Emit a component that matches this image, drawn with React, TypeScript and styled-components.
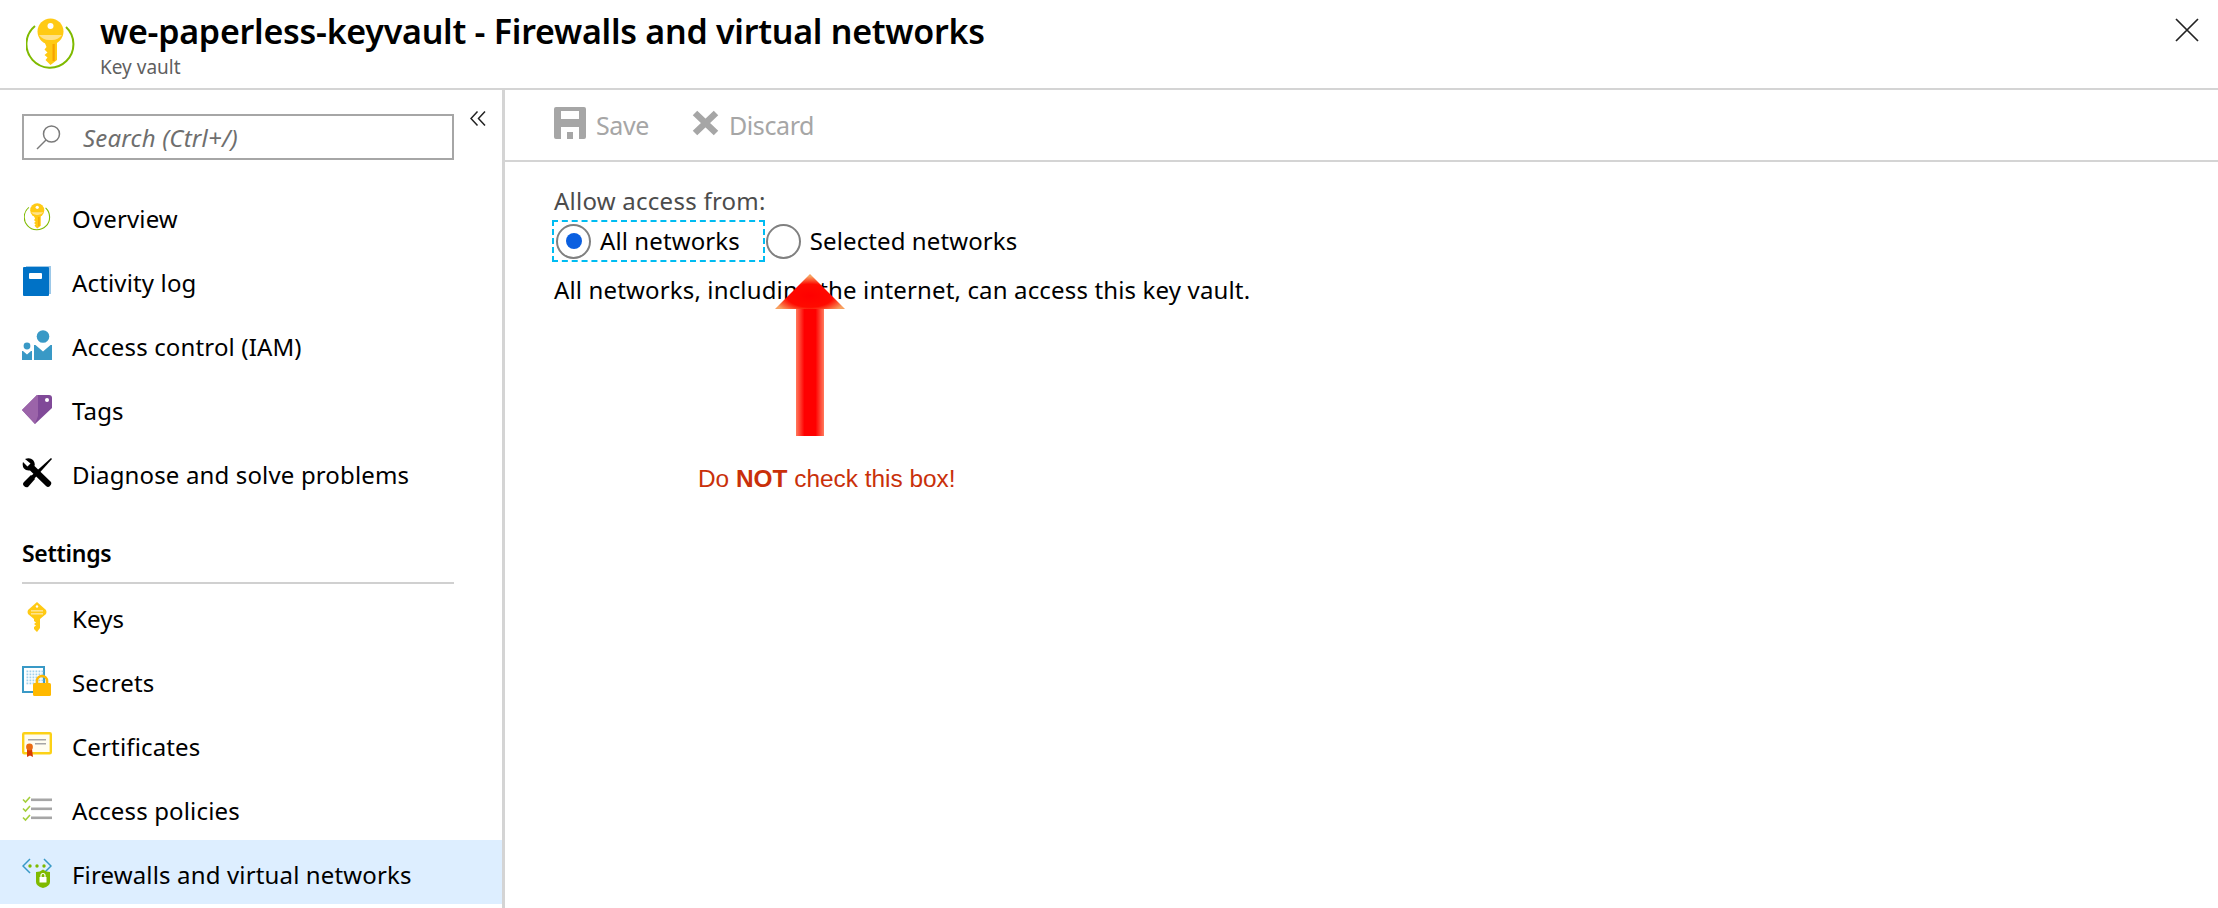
import React from 'react';
import styled, { createGlobalStyle } from 'styled-components';

const GlobalStyle = createGlobalStyle`
    html, body {
        margin: 0;
        padding: 0;
        background: #ffffff;
    }
    body {
        font-family: "Noto Sans", "Open Sans", sans-serif;
        color: #000000;
    }
`;

const KeyVaultIcon = ({ size }: { size: number }) => (
    <svg width={size} height={size * 1.04} viewBox="0 0 50 52">
        <path d="M9 8 A23.5 23.5 0 1 0 40 9" fill="none" stroke="#7fba00" strokeWidth="2" />
        <circle cx="24.5" cy="13.5" r="13" fill="#ffca14" />
        <path d="M18.5 24 H31 V42 L24.5 47 L19.5 42 L21.5 39.5 L18.5 37 L21.5 34.5 L18.5 31.5 L20.5 29 Z" fill="#ffca14" />
        <path d="M13 17 H36 A13 13 0 0 1 24.5 22 A13 13 0 0 1 13 17 Z" fill="#ffe28a" />
        <circle cx="24.5" cy="8" r="3" fill="#ffffff" />
        <rect x="26.5" y="26" width="2.2" height="17" fill="#f7a300" />
    </svg>
);

const BookIcon = () => (
    <svg width="28" height="30" viewBox="0 0 28 30">
        <path d="M3 0 H28 V28 H25 V2 H3 Z" fill="#9cc8e8" />
        <rect x="0" y="1" width="26" height="29" rx="1" fill="#0072c6" />
        <rect x="6" y="7" width="13" height="6" rx="1" fill="#ffffff" />
    </svg>
);

const PeopleIcon = () => (
    <svg width="30" height="30" viewBox="0 0 30 30">
        <circle cx="21" cy="6.5" r="6.3" fill="#3999c6" />
        <path d="M12 15 H13.5 L21 21.5 L28.5 15 H30 V30 H12 Z" fill="#3999c6" />
        <circle cx="5" cy="16" r="3.4" fill="#3999c6" />
        <path d="M0 21 H1 L5 24.5 L9 21 H10 V30 H0 Z" fill="#3999c6" />
    </svg>
);

const TagIcon = () => (
    <svg width="30" height="30" viewBox="0 0 30 30">
        <path d="M0 16 L15 1 H27 Q30 1 30 4 V14 L13 30 Z" fill="#804998" />
        <path d="M0 16 L15 1 H16 V22 L13 30 Z" fill="#9b64a9" />
        <circle cx="25" cy="6" r="2" fill="#ffffff" />
    </svg>
);

const ToolsIcon = () => (
    <svg width="30" height="30" viewBox="0 0 30 30">
        <path d="M29 0 L30 1 L12 21 L9 18 Z" fill="#000000" />
        <path d="M9 17 L13 21 L6 29 Q4 30 2 28 Q0 26 2 24 Z" fill="#000000" />
        <path d="M3 1 Q8 -1 11 2 Q13.5 5 12.5 8 L29 24 Q30 26 28 28 Q26 30 24 28 L8 12.5 Q4 13 2 10.5 Q0 8 1 4 L5.5 8.5 L8.5 5.5 Z" fill="#000000" />
    </svg>
);

const KeyIcon = () => (
    <svg width="20" height="30" viewBox="0 0 20 30">
        <path d="M10 0 L19 8 Q20 10 19 12 L13 17 V26 L10 30 L7 27 V25 L9 23.5 L7 22 L9 20.5 L7 19 V17 L1 12 Q0 10 1 8 Z" fill="#ffca14" />
        <rect x="4" y="8" width="12" height="1.6" fill="#ffe28a" />
        <rect x="4" y="11" width="12" height="1.6" fill="#ffe28a" />
        <circle cx="10" cy="4.5" r="1.2" fill="#ffffff" />
    </svg>
);

const SecretIcon = () => {
    const dots: React.ReactNode[] = [];
    for (let r = 0; r < 5; r++) {
        for (let c = 0; c < 6; c++) {
            dots.push(<rect key={`${r}-${c}`} x={4.5 + c * 3} y={4.5 + r * 3} width="1.8" height="1.8" fill="#9fd0ec" />);
        }
    }
    return (
        <svg width="30" height="30" viewBox="0 0 30 30">
            <rect x="1" y="1" width="21" height="25" fill="#ffffff" stroke="#3999c6" strokeWidth="2" />
            {dots}
            <path d="M15 18 V15 A5 5 0 0 1 25 15 V18" fill="none" stroke="#ffb900" strokeWidth="2.6" />
            <rect x="11" y="17" width="18" height="13" rx="1.5" fill="#ffb900" />
        </svg>
    );
};

const CertIcon = () => (
    <svg width="30" height="26" viewBox="0 0 30 26">
        <rect x="1.2" y="1.2" width="27.6" height="20" rx="1" fill="#fffdf0" stroke="#fcd116" strokeWidth="2.4" />
        <rect x="6" y="7" width="18" height="1.5" fill="#a6a6a6" />
        <rect x="13" y="11" width="11" height="1.5" fill="#a6a6a6" />
        <path d="M5 17 H10 L11 25 L8 23.5 L5 25 Z" fill="#d83b01" />
        <circle cx="7.5" cy="15" r="3.4" fill="#ea6b12" />
    </svg>
);

const PolicyIcon = () => (
    <svg width="30" height="26" viewBox="0 0 30 26">
        <g fill="none" stroke="#a4cf3a" strokeWidth="1.6">
            <path d="M1 3.5 L3.5 6 L8 1" />
            <path d="M1 12.5 L3.5 15 L8 10" />
            <path d="M1 21.5 L3.5 24 L8 19" />
        </g>
        <rect x="9" y="2.5" width="21" height="2.6" fill="#a6a6a6" />
        <rect x="9" y="11.5" width="21" height="2.6" fill="#a6a6a6" />
        <rect x="9" y="20.5" width="21" height="2.6" fill="#a6a6a6" />
    </svg>
);

const FirewallIcon = () => (
    <svg width="30" height="30" viewBox="0 0 30 30">
        <g fill="none" stroke="#3999c6" strokeWidth="1.5">
            <path d="M8 1 L1 8 L8 15" />
            <path d="M22 1 L29 8 L22 15" />
        </g>
        <circle cx="8" cy="8" r="1.7" fill="#7fba00" />
        <circle cx="15" cy="8" r="1.7" fill="#7fba00" />
        <circle cx="22" cy="8" r="1.7" fill="#7fba00" />
        <path d="M14 14 Q18 14 21 11.5 Q24 14 28 14 V24 Q28 28 21 30 Q14 28 14 24 Z" fill="#7fba00" />
        <rect x="17.5" y="19" width="7" height="5.5" fill="#ffffff" />
        <path d="M19 19 V17.5 A2 2 0 0 1 23 17.5 V19" fill="none" stroke="#ffffff" strokeWidth="1.2" />
    </svg>
);

const SaveIcon = () => (
    <svg width="32" height="32" viewBox="0 0 32 32">
        <path d="M2 0 H30 Q32 0 32 2 V30 Q32 32 30 32 H25 V20 H7 V32 H2 Q0 32 0 30 V2 Q0 0 2 0 Z M7 4 V12 H25 V4 Z" fill="#a6a6a6" fillRule="evenodd" />
        <rect x="13" y="25" width="6" height="7" fill="#a6a6a6" />
    </svg>
);

const DiscardIcon = () => (
    <svg width="27" height="28" viewBox="0 0 27 28">
        <path d="M3 4 L24 24 M24 4 L3 24" stroke="#a6a6a6" strokeWidth="6.5" fill="none" />
    </svg>
);

const SearchGlyph = () => (
    <svg width="26" height="26" viewBox="0 0 26 26">
        <circle cx="15.5" cy="10" r="8" fill="none" stroke="#7a7a7a" strokeWidth="1.5" />
        <path d="M10 16 L1 25" stroke="#7a7a7a" strokeWidth="1.5" />
    </svg>
);

const CollapseGlyph = () => (
    <svg width="16" height="15" viewBox="0 0 16 15">
        <path d="M7.5 0.5 L1 7.5 L7.5 14.5 M15 0.5 L8.5 7.5 L15 14.5" fill="none" stroke="#222222" strokeWidth="1.5" />
    </svg>
);

const CloseGlyph = () => (
    <svg width="24" height="24" viewBox="0 0 24 24">
        <path d="M1 1 L23 23 M23 1 L1 23" stroke="#222222" strokeWidth="1.7" />
    </svg>
);

const RedArrow = () => (
    <svg width="70" height="162" viewBox="0 0 70 162">
        <defs>
            <linearGradient id="shaft" x1="0" x2="1" y1="0" y2="0">
                <stop offset="0" stopColor="#ff7a5c" />
                <stop offset="0.3" stopColor="#ff0000" />
                <stop offset="0.7" stopColor="#ff0000" />
                <stop offset="1" stopColor="#ff7a5c" />
            </linearGradient>
            <radialGradient id="head" cx="0.5" cy="0.62" r="0.55">
                <stop offset="0" stopColor="#ff0000" />
                <stop offset="0.6" stopColor="#ff0a00" />
                <stop offset="1" stopColor="#f7a060" />
            </radialGradient>
        </defs>
        <path d="M35 0 L70 35 H0 Z" fill="url(#head)" />
        <rect x="21" y="35" width="28" height="127" fill="url(#shaft)" />
    </svg>
);

const App = () => {
    const topItems = [
        { label: 'Overview', icon: <KeyVaultIcon size={27} /> },
        { label: 'Activity log', icon: <BookIcon /> },
        { label: 'Access control (IAM)', icon: <PeopleIcon /> },
        { label: 'Tags', icon: <TagIcon /> },
        { label: 'Diagnose and solve problems', icon: <ToolsIcon /> },
    ];
    const settingsItems = [
        { label: 'Keys', icon: <KeyIcon /> },
        { label: 'Secrets', icon: <SecretIcon /> },
        { label: 'Certificates', icon: <CertIcon /> },
        { label: 'Access policies', icon: <PolicyIcon /> },
        { label: 'Firewalls and virtual networks', icon: <FirewallIcon />, active: true },
    ];
    return (
        <Page>
            <GlobalStyle />
            <Header>
                <HeaderIcon><KeyVaultIcon size={50} /></HeaderIcon>
                <HeaderText>
                    <Title>we-paperless-keyvault - Firewalls and virtual networks</Title>
                    <Subtitle>Key vault</Subtitle>
                </HeaderText>
                <CloseButton><CloseGlyph /></CloseButton>
            </Header>
            <Body>
                <Sidebar>
                    <SearchRow>
                        <SearchBox>
                            <SearchGlyph />
                            <SearchText>Search (Ctrl+/)</SearchText>
                        </SearchBox>
                        <CollapseButton><CollapseGlyph /></CollapseButton>
                    </SearchRow>
                    <Menu>
                        {topItems.map((item) => (
                            <MenuItem key={item.label}>
                                <IconSlot>{item.icon}</IconSlot>
                                <MenuLabel>{item.label}</MenuLabel>
                            </MenuItem>
                        ))}
                    </Menu>
                    <SectionHead>Settings</SectionHead>
                    <Menu>
                        {settingsItems.map((item) => (
                            <MenuItem key={item.label} $active={item.active}>
                                <IconSlot>{item.icon}</IconSlot>
                                <MenuLabel>{item.label}</MenuLabel>
                            </MenuItem>
                        ))}
                    </Menu>
                </Sidebar>
                <Main>
                    <Toolbar>
                        <ToolButton>
                            <SaveIcon />
                            <ToolLabel>Save</ToolLabel>
                        </ToolButton>
                        <ToolButton>
                            <DiscardIcon />
                            <ToolLabel>Discard</ToolLabel>
                        </ToolButton>
                    </Toolbar>
                    <Content>
                        <FieldLabel>Allow access from:</FieldLabel>
                        <RadioRow>
                            <RadioOption $focused>
                                <RadioCircle $checked />
                                <RadioLabel>All networks</RadioLabel>
                            </RadioOption>
                            <RadioOption>
                                <RadioCircle />
                                <RadioLabel>Selected networks</RadioLabel>
                            </RadioOption>
                        </RadioRow>
                        <Description>All networks, including the internet, can access this key vault.</Description>
                    </Content>
                    <Annotation>
                        <RedArrow />
                        <Warning>Do <strong>NOT</strong> check this box!</Warning>
                    </Annotation>
                </Main>
            </Body>
        </Page>
    );
};

export default App;

const Page = styled.div`
    width: 2218px;
    height: 908px;
    display: flex;
    flex-direction: column;
    overflow: hidden;
    background: #ffffff;
`;

const Header = styled.header`
    height: 88px;
    flex: none;
    display: flex;
    align-items: flex-start;
    border-bottom: 2px solid #d4d4d4;
`;

const HeaderIcon = styled.div`
    width: 50px;
    margin: 18px 0 0 26px;
`;

const HeaderText = styled.div`
    margin-left: 24px;
    flex: 1;
`;

const Title = styled.h1`
    margin: 8px 0 0;
    font-size: 34px;
    line-height: 46px;
    font-weight: 600;
    letter-spacing: -0.26px;
    color: #000000;
`;

const Subtitle = styled.div`
    margin-top: 2px;
    font-size: 19px;
    line-height: 22px;
    color: #5f5f5f;
`;

const CloseButton = styled.div`
    margin: 18px 19px 0 0;
    height: 24px;
`;

const Body = styled.div`
    flex: 1;
    display: flex;
    min-height: 0;
`;

const Sidebar = styled.aside`
    width: 502px;
    flex: none;
    border-right: 3px solid #d4d4d4;
    padding-top: 24px;
`;

const SearchRow = styled.div`
    display: flex;
    align-items: flex-start;
    margin: 0 0 24px 22px;
`;

const SearchBox = styled.div`
    box-sizing: border-box;
    width: 432px;
    height: 46px;
    border: 2px solid #a6a6a6;
    display: flex;
    align-items: center;
    padding-left: 12px;
`;

const SearchText = styled.span`
    margin-left: 21px;
    font-size: 24px;
    font-style: italic;
    letter-spacing: 0.2px;
    color: #6e6e6e;
`;

const CollapseButton = styled.div`
    margin: -5px 0 0 16px;
`;

const Menu = styled.nav`
    display: flex;
    flex-direction: column;
`;

const MenuItem = styled.div<{ $active?: boolean }>`
    height: 64px;
    display: flex;
    align-items: center;
    padding-left: 22px;
    background: ${(p) => (p.$active ? '#ddeeff' : 'transparent')};
`;

const IconSlot = styled.div`
    width: 30px;
    margin-right: 20px;
    margin-top: 2px;
    display: flex;
    justify-content: center;
`;

const MenuLabel = styled.span`
    font-size: 24px;
    line-height: 32px;
    letter-spacing: 0.15px;
    padding-top: 6px;
`;

const SectionHead = styled.div`
    box-sizing: border-box;
    height: 80px;
    margin: 0 48px 0 22px;
    padding-top: 33px;
    border-bottom: 2px solid #d0d0d0;
    font-size: 23px;
    line-height: 32px;
    font-weight: 600;
    letter-spacing: -0.3px;
`;

const Main = styled.main`
    flex: 1;
    position: relative;
`;

const Toolbar = styled.div`
    height: 70px;
    box-sizing: content-box;
    display: flex;
    align-items: center;
    gap: 43px;
    padding-left: 49px;
    border-bottom: 2px solid #d4d4d4;
`;

const ToolButton = styled.div`
    display: flex;
    align-items: center;
    gap: 10px;
    margin-top: -4px;
`;

const ToolLabel = styled.span`
    font-size: 25px;
    letter-spacing: -0.4px;
    color: #a6a6a6;
    margin-top: 3px;
`;

const Content = styled.section`
    padding: 21px 0 0 49px;
`;

const FieldLabel = styled.div`
    margin-bottom: 1px;
    font-size: 24px;
    line-height: 36px;
    letter-spacing: 0.25px;
    color: #4c4c4c;
`;

const RadioRow = styled.div`
    display: flex;
    margin-left: -2px;
`;

const RadioOption = styled.div<{ $focused?: boolean }>`
    box-sizing: border-box;
    height: 42px;
    display: flex;
    align-items: center;
    padding: 0 23px 0 2px;
    margin-right: -3px;
    border: 2px ${(p) => (p.$focused ? 'dashed #00bcf2' : 'solid transparent')};
`;

const RadioCircle = styled.span<{ $checked?: boolean }>`
    box-sizing: border-box;
    width: 35px;
    height: 35px;
    border-radius: 50%;
    border: 2px solid #808080;
    margin-right: 9px;
    display: flex;
    align-items: center;
    justify-content: center;
    &::after {
        content: '';
        width: 16px;
        height: 16px;
        border-radius: 50%;
        background: ${(p) => (p.$checked ? '#0a5fe0' : 'transparent')};
    }
`;

const RadioLabel = styled.span`
    margin-top: -2px;
    font-size: 24px;
    letter-spacing: 0.1px;
`;

const Description = styled.p`
    margin: 10px 0 0;
    font-size: 24px;
    line-height: 36px;
    letter-spacing: 0.15px;
`;

const Annotation = styled.div`
    position: absolute;
    left: 270px;
    top: 184px;
    display: flex;
    flex-direction: column;
    align-items: flex-start;
`;

const Warning = styled.div`
    margin: 28px 0 0 -77px;
    font-family: "Liberation Sans", Arial, sans-serif;
    font-size: 24.4px;
    line-height: 30px;
    white-space: nowrap;
    color: #c9300a;
    strong {
        font-weight: 700;
    }
`;
